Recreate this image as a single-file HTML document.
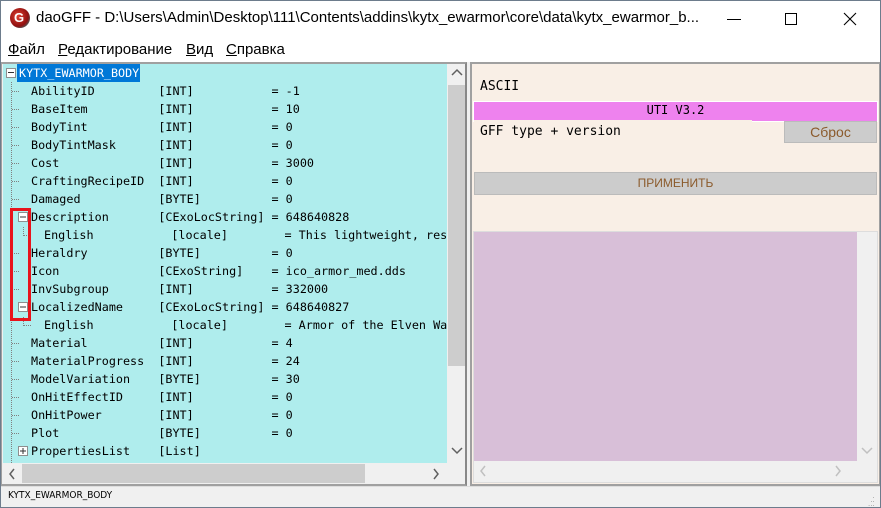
<!DOCTYPE html>
<html><head><meta charset="utf-8"><style>
*{margin:0;padding:0;box-sizing:border-box}
body{width:881px;height:508px;position:relative;background:#f0f0f0;overflow:hidden;font-family:"Liberation Sans","DejaVu Sans",sans-serif}
.abs{position:absolute}
.mono{font-family:"DejaVu Sans Mono","Liberation Mono",monospace;font-size:11.75px;white-space:pre}
.row{position:absolute;height:18px;line-height:18px}
.m{position:absolute;top:41px;font-size:15px;white-space:pre}
</style></head><body>
<div class="abs" style="left:0;top:0;width:881px;height:62px;background:#fff;border:1px solid #6d7c8c;border-bottom:none"></div>
<div class="abs" style="left:10px;top:8px;width:20px;height:20px;border-radius:50%;background:radial-gradient(circle at 40% 40%,#e04030,#901010 60%,#555 75%,#ddd 85%);"></div>
<div class="abs" style="left:14px;top:10px;font-size:13px;color:#fff;font-weight:bold">G</div>
<div class="abs" style="left:36px;top:9px;font-size:15px;color:#000;white-space:nowrap">daoGFF - D:\Users\Admin\Desktop\111\Contents\addins\kytx_ewarmor\core\data\kytx_ewarmor_b...</div>
<div class="abs" style="left:727px;top:19px;width:14px;height:1px;background:#000"></div>
<div class="abs" style="left:785px;top:13px;width:12px;height:12px;border:1px solid #000"></div>
<svg class="abs" style="left:843px;top:12px" width="14" height="14"><path d="M1 1L13 13M13 1L1 13" stroke="#000" stroke-width="1.1"/></svg>
<div class="m" style="left:8px"><u>Ф</u>айл</div>
<div class="m" style="left:58px"><u>Р</u>едактирование</div>
<div class="m" style="left:186px"><u>В</u>ид</div>
<div class="m" style="left:226px"><u>С</u>правка</div>

<!-- left panel -->
<div class="abs" style="left:0;top:62px;width:467px;height:424px;border:2px solid #a0a0a0;border-right-color:#888;background:#f0f0f0"></div>
<div class="abs" style="left:3px;top:64px;width:444px;height:399px;background:#afeded"></div>
<div class="abs" style="left:17px;top:64px;width:123px;height:18px;background:#0078d7"></div>
<div class="abs" style="left:6px;top:68px;width:10px;height:10px;border:1px solid #8e8f8f;background:#fff"></div>
<div class="abs" style="left:8px;top:72px;width:6px;height:1px;background:#333"></div>
<div class="abs" style="left:11px;top:82px;height:381px;border-left:1px dotted #808080"></div>
<div class="abs" style="left:23px;top:227px;height:9px;border-left:1px dotted #808080"></div>
<div class="abs" style="left:23px;top:317px;height:9px;border-left:1px dotted #808080"></div>
<div class="mono abs" style="left:0;top:64px;width:447px;height:399px;overflow:hidden;color:#000">
<div class="row" style="left:19px;top:0;color:#fff">KYTX_EWARMOR_BODY</div>
<div class="row" style="left:31px;top:18px">AbilityID         [INT]           = -1</div>
<div class="row" style="left:31px;top:36px">BaseItem          [INT]           = 10</div>
<div class="row" style="left:31px;top:54px">BodyTint          [INT]           = 0</div>
<div class="row" style="left:31px;top:72px">BodyTintMask      [INT]           = 0</div>
<div class="row" style="left:31px;top:90px">Cost              [INT]           = 3000</div>
<div class="row" style="left:31px;top:108px">CraftingRecipeID  [INT]           = 0</div>
<div class="row" style="left:31px;top:126px">Damaged           [BYTE]          = 0</div>
<div class="row" style="left:31px;top:144px">Description       [CExoLocString] = 648640828</div>
<div class="row" style="left:44px;top:162px">English           [locale]        = This lightweight, resi</div>
<div class="row" style="left:31px;top:180px">Heraldry          [BYTE]          = 0</div>
<div class="row" style="left:31px;top:198px">Icon              [CExoString]    = ico_armor_med.dds</div>
<div class="row" style="left:31px;top:216px">InvSubgroup       [INT]           = 332000</div>
<div class="row" style="left:31px;top:234px">LocalizedName     [CExoLocString] = 648640827</div>
<div class="row" style="left:44px;top:252px">English           [locale]        = Armor of the Elven War</div>
<div class="row" style="left:31px;top:270px">Material          [INT]           = 4</div>
<div class="row" style="left:31px;top:288px">MaterialProgress  [INT]           = 24</div>
<div class="row" style="left:31px;top:306px">ModelVariation    [BYTE]          = 30</div>
<div class="row" style="left:31px;top:324px">OnHitEffectID     [INT]           = 0</div>
<div class="row" style="left:31px;top:342px">OnHitPower        [INT]           = 0</div>
<div class="row" style="left:31px;top:360px">Plot              [BYTE]          = 0</div>
<div class="row" style="left:31px;top:378px">PropertiesList    [List]</div>
</div>
<svg class="abs" style="left:0;top:0" width="40" height="470">
<g stroke="#808080" stroke-dasharray="1 1">
<line x1="12" y1="91.5" x2="19" y2="91.5"/><line x1="12" y1="109.5" x2="19" y2="109.5"/><line x1="12" y1="127.5" x2="19" y2="127.5"/><line x1="12" y1="145.5" x2="19" y2="145.5"/><line x1="12" y1="163.5" x2="19" y2="163.5"/><line x1="12" y1="181.5" x2="19" y2="181.5"/><line x1="12" y1="199.5" x2="19" y2="199.5"/><line x1="24" y1="235.5" x2="31" y2="235.5"/><line x1="12" y1="253.5" x2="19" y2="253.5"/><line x1="12" y1="271.5" x2="19" y2="271.5"/><line x1="12" y1="289.5" x2="19" y2="289.5"/><line x1="24" y1="325.5" x2="31" y2="325.5"/><line x1="12" y1="343.5" x2="19" y2="343.5"/><line x1="12" y1="361.5" x2="19" y2="361.5"/><line x1="12" y1="379.5" x2="19" y2="379.5"/><line x1="12" y1="397.5" x2="19" y2="397.5"/><line x1="12" y1="415.5" x2="19" y2="415.5"/><line x1="12" y1="433.5" x2="19" y2="433.5"/>
</g>
<g fill="#fff" stroke="#8e8f8f"><rect x="18.5" y="212.5" width="9" height="9"/><rect x="18.5" y="302.5" width="9" height="9"/><rect x="18.5" y="446.5" width="9" height="9"/></g>
<g stroke="#333"><line x1="20" y1="217" x2="26" y2="217"/><line x1="20" y1="307" x2="26" y2="307"/><line x1="20" y1="451" x2="26" y2="451"/><line x1="23" y1="448" x2="23" y2="454"/></g>
<rect x="11.5" y="209.5" width="18" height="110" fill="none" stroke="#e8141c" stroke-width="3"/>
</svg>
<div class="abs" style="left:447px;top:64px;width:18px;height:399px;background:#f0f0f0"></div>
<div class="abs" style="left:448px;top:85px;width:17px;height:281px;background:#cdcdcd"></div>
<svg class="abs" style="left:450px;top:68px" width="14" height="10"><path d="M2 7L7 2L12 7" stroke="#606060" stroke-width="1.5" fill="none"/></svg>
<svg class="abs" style="left:450px;top:446px" width="14" height="10"><path d="M2 2L7 7L12 2" stroke="#606060" stroke-width="1.5" fill="none"/></svg>
<div class="abs" style="left:22px;top:464px;width:343px;height:19px;background:#cdcdcd"></div>
<svg class="abs" style="left:6px;top:467px" width="12" height="14"><path d="M8 2L4 7L8 12" stroke="#606060" stroke-width="1.5" fill="none"/></svg>
<svg class="abs" style="left:430px;top:467px" width="12" height="14"><path d="M4 2L8 7L4 12" stroke="#606060" stroke-width="1.5" fill="none"/></svg>

<div class="abs" style="left:470px;top:62px;width:411px;height:424px;border:2px solid #a0a0a0;background:#f9efe6"></div>
<div class="abs mono" style="left:480px;top:79px;font-size:13px">ASCII</div>
<div class="abs" style="left:473px;top:101px;width:405px;height:21px;background:#ee82ee;border:1px solid #fff"></div>
<div class="abs mono" style="left:474px;top:103px;width:403px;text-align:center;font-size:12px">UTI V3.2</div>
<div class="abs" style="left:474px;top:120px;width:278px;height:2px;background:#f9efe6"></div>
<div class="abs mono" style="left:480px;top:124px;font-size:13px">GFF type + version</div>
<div class="abs" style="left:784px;top:121px;width:93px;height:22px;background:#cccccc;border:1px solid #bbb;color:#8b5a2b;font-size:14px;text-align:center;line-height:20px">Сброс</div>
<div class="abs" style="left:474px;top:172px;width:403px;height:23px;background:#cccccc;border:1px solid #bbb;color:#8b5a2b;font-size:12px;text-align:center;line-height:21px">ПРИМЕНИТЬ</div>
<div class="abs" style="left:473px;top:231px;width:405px;height:252px;background:#f0f0f0;border:1px solid #ddd"></div>
<div class="abs" style="left:474px;top:232px;width:383px;height:229px;background:#d8bfd8"></div>
<svg class="abs" style="left:860px;top:446px" width="14" height="10"><path d="M2 2L7 7L12 2" stroke="#c0c0c0" stroke-width="1.5" fill="none"/></svg>
<svg class="abs" style="left:477px;top:464px" width="12" height="14"><path d="M8 2L4 7L8 12" stroke="#c0c0c0" stroke-width="1.5" fill="none"/></svg>
<svg class="abs" style="left:832px;top:464px" width="12" height="14"><path d="M4 2L8 7L4 12" stroke="#c0c0c0" stroke-width="1.5" fill="none"/></svg>

<div class="abs" style="left:0;top:486px;width:881px;height:22px;background:#f0f0f0;border-top:1px solid #ddd"></div>
<div class="abs" style="left:8px;top:490px;font-size:10px;font-family:'DejaVu Sans Condensed','Liberation Sans',sans-serif">KYTX_EWARMOR_BODY</div>
<div class="abs" style="left:868px;top:494px;font-size:8px;color:#999;line-height:4px">&nbsp;&nbsp;.<br>&nbsp;..<br>...</div>
<div class="abs" style="left:0;top:0;width:881px;height:508px;border:1px solid #6d7c8c;border-top:none"></div>
</body></html>
